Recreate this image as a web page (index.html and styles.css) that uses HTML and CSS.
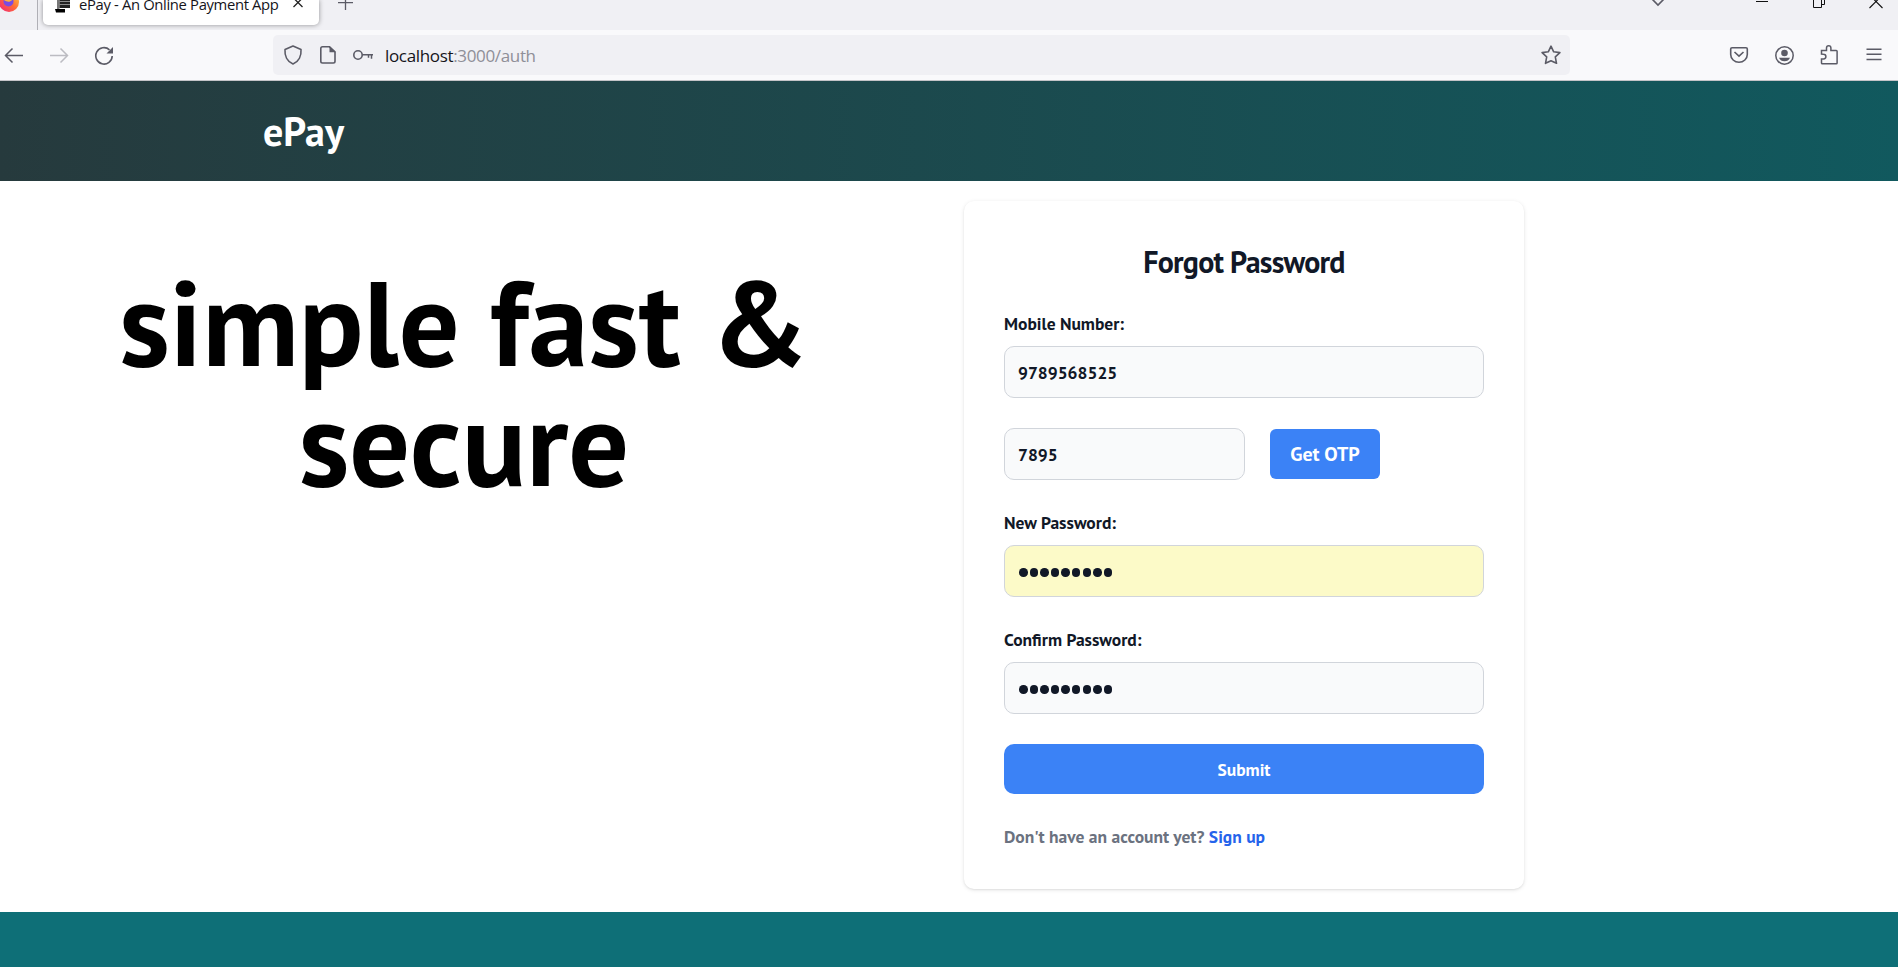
FILE: index.html
```
<!DOCTYPE html>
<html lang="en">
<head>
<meta charset="utf-8">
<title>ePay - An Online Payment App</title>
<link rel="stylesheet" href="styles.css">
</head>
<body>
<div class="tabstrip">
  <svg class="fx" width="20" height="30" viewBox="0 0 20 30"><defs><linearGradient id="fxg" x1="1" y1="0" x2="0" y2="1"><stop offset="0" stop-color="#ffd43a"/><stop offset=".5" stop-color="#ff6a36"/><stop offset="1" stop-color="#f0207e"/></linearGradient></defs><circle cx="9" cy="2" r="10" fill="url(#fxg)"/><circle cx="8.500" cy="1.500" r="5" fill="#7a4be0"/><path d="M4 0c3 2 6 3 9-1l-1-3H4z" fill="#ffb23a"/></svg>
  <div class="sep"></div>
  <div class="tab">
    <svg class="fav" width="16" height="14" viewBox="0 0 16 14"><path d="M2-1h2.500V9H2z" fill="#777"/><path d="M4.500-2H15V8H4.500z" fill="#222"/><path d="M4.500 1.500H15M4.500 4.500H15" stroke="#999" stroke-width=".9"/><path d="M0 9h10v3.500H1z" fill="#000"/></svg>
    <span class="tabtitle">ePay - An Online Payment App</span>
    <svg class="tabx" width="12" height="10" viewBox="0 0 12 10"><path d="M1.500-2l9 9M10.500-2l-9 9" stroke="#222" stroke-width="1.300"/></svg>
  </div>
  <svg class="plus" width="16" height="12" viewBox="0 0 16 12"><path d="M0 2.700h15M7.500-4v14" stroke="#5b5b66" stroke-width="1.300"/></svg>
  <div class="winctl">
    <svg width="14" height="12" viewBox="0 0 14 12"><path d="M1-1l6 6 6-6" fill="none" stroke="#5b5b66" stroke-width="1.600"/></svg>
    <svg class="min" width="12" height="12" viewBox="0 0 12 12"><path d="M0 1.500h12" stroke="#111"/></svg>
    <svg class="res" width="13" height="12" viewBox="0 0 13 12"><path d="M.5-2v9.500h8V-2M9 4.500h2.500V-2" fill="none" stroke="#111"/></svg>
    <svg class="cls" width="14" height="12" viewBox="0 0 14 12"><path d="M.5-5l13 13M13.500-5l-13 13" stroke="#111" stroke-width="1.100"/></svg>
  </div>
</div>
<div class="toolbar">
  <div class="nav">
    <svg width="20" height="20" viewBox="0 0 20 20"><path d="M1 10.500h18M8.500 3.500L1.500 10.500l7 7" fill="none" stroke="#5b5b66" stroke-width="1.500"/></svg>
    <svg width="20" height="20" viewBox="0 0 20 20"><path d="M1 10.500h18M11.500 3.500l7 7-7 7" fill="none" stroke="#bcbcc2" stroke-width="1.500"/></svg>
    <svg width="20" height="20" viewBox="0 0 20 20"><path d="M15.500 4.800A8.200 8.200 0 1 0 18.200 11" fill="none" stroke="#5b5b66" stroke-width="1.600"/><path d="M19 2v6.500h-6.500z" fill="#5b5b66"/></svg>
  </div>
  <div class="urlbar">
    <svg class="u1" width="20" height="20" viewBox="0 0 20 20"><path d="M10 1l8 3.500c.5 6-2 12-8 14.500C4 16.500 1.500 10.500 2 4.500z" fill="none" stroke="#5b5b66" stroke-width="1.600" stroke-linejoin="round"/></svg>
    <svg class="u2" width="20" height="20" viewBox="0 0 20 20"><path d="M4.500 1.800h7l5.500 5v9.500q0 1.700-1.700 1.700H4.500q-1.700 0-1.700-1.700V3.500q0-1.700 1.700-1.700z" fill="none" stroke="#5b5b66" stroke-width="1.600"/><path d="M11.500 1v6.200h6z" fill="#5b5b66"/></svg>
    <svg class="u3" width="20" height="20" viewBox="0 0 20 20"><circle cx="5" cy="10" r="4.200" fill="none" stroke="#5b5b66" stroke-width="1.600"/><path d="M9 9.700h11M18.500 9.700v4M15.500 9.700v3" fill="none" stroke="#5b5b66" stroke-width="1.500"/></svg>
    <span class="url">localhost<span class="path">:3000/auth</span></span>
    <svg class="star" width="20" height="20" viewBox="0 0 20 20"><path d="M10 1.200l2.700 5.600 6.200.8-4.600 4.200 1.200 6.500L10 15.800l-5.500 2.500 1.200-6.500L1.100 7.600l6.200-.8z" fill="none" stroke="#5b5b66" stroke-width="1.600" stroke-linejoin="round"/></svg>
  </div>
  <div class="tools">
    <svg width="20" height="20" viewBox="0 0 20 20"><path d="M3 2.800h14q1.300 0 1.300 1.300v5.400a8.300 7.800 0 0 1-16.600 0V4.100Q1.700 2.800 3 2.800z" fill="none" stroke="#5b5b66" stroke-width="1.600"/><path d="M5.500 7L10 11.200 14.500 7" fill="none" stroke="#5b5b66" stroke-width="1.600"/></svg>
    <svg width="20" height="20" viewBox="0 0 20 20"><circle cx="10.500" cy="10.500" r="8.700" fill="none" stroke="#5b5b66" stroke-width="1.500"/><circle cx="10.500" cy="8" r="3.300" fill="#5b5b66"/><path d="M5 12.700h11q-1.500 3.600-5.500 3.600t-5.500-3.600z" fill="#5b5b66"/></svg>
    <svg width="20" height="20" viewBox="0 0 20 20"><path d="M2.500 9V5.500h5V3a2.200 2.200 0 0 1 4.400 0v2.500h5.400q.8 0 .8.800V18q0 .8-.8.800H3.300q-.8 0-.8-.8v-4H4.500a2.300 2.300 0 0 0 0-4.800z" fill="none" stroke="#5b5b66" stroke-width="1.500"/></svg>
    <svg width="20" height="20" viewBox="0 0 20 20"><path d="M2.500 4.200h15M2.500 9.200h15M2.500 14.400h15" stroke="#5b5b66" stroke-width="1.500"/></svg>
  </div>
</div>
<header class="header"><span class="brand">ePay</span></header>
<main class="main">
  <h1 class="hero">simple fast &amp;<br>secure</h1>
  <section class="card">
    <h2 class="title">Forgot Password</h2>
    <div class="field"><label class="label">Mobile Number:</label><div class="input"><span class="num">9789568525</span></div></div>
    <div class="otp"><div class="input short"><span class="num">7895</span></div><button class="getotp">Get OTP</button></div>
    <div class="field"><label class="label">New Password:</label><div class="input filled"><span class="dots"><i></i><i></i><i></i><i></i><i></i><i></i><i></i><i></i><i></i></span></div></div>
    <div class="field"><label class="label">Confirm Password:</label><div class="input"><span class="dots"><i></i><i></i><i></i><i></i><i></i><i></i><i></i><i></i><i></i></span></div></div>
    <button class="submit">Submit</button>
    <p class="signup">Don't have an account yet? <a class="link">Sign up</a></p>
  </section>
</main>
<footer class="footer"></footer>
</body>
</html>
```
FILE: styles.css
```
* { box-sizing: border-box; }
body { margin: 0; height: 967px; overflow: hidden; background: #fff; display: flex; flex-direction: column; font-family: "PT Sans", "Open Sans", "Noto Sans", sans-serif; font-weight: 700; }
svg { display: block; flex: none; }
.tabstrip { height: 30px; background: #f0f0f4; display: flex; align-items: flex-start; overflow: hidden; }
.sep { width: 1px; height: 30px; margin-left: 17px; background: #b0b0b6; }
.tab { width: 276px; height: 25px; margin-left: 5px; background: #fff; border-radius: 0 0 5px 5px; box-shadow: 0 0 5px rgba(0,0,0,.4); display: flex; align-items: flex-start; padding-left: 12px; }
.tabtitle { font: 400 14.8px/20px "Open Sans", sans-serif; letter-spacing: -.34px; color: #15141a; margin: -6px 0 0 8px; width: 204px; white-space: nowrap; }
.tabx { margin-left: 9px; }
.plus { margin-left: 19px; }
.winctl { margin-left: auto; display: flex; padding-right: 15px; }
.min { margin-left: 91px; }
.res { margin-left: 45px; }
.cls { margin-left: 43px; }
.toolbar { height: 51px; background: #f9f9fb; border-bottom: 1px solid #c4c4c8; display: flex; align-items: center; }
.nav { display: flex; gap: 25px; padding-left: 4px; width: 273px; }
.urlbar { width: 1297px; height: 40px; border-radius: 5px; background: #f0f0f4; display: flex; align-items: center; padding: 0 9px 0 10px; }
.u2 { margin-left: 15px; }
.u3 { margin-left: 15px; }
.url { font: 400 17px/24px "Open Sans", sans-serif; letter-spacing: -.34px; color: #15141a; margin-left: 12px; padding-top: 2px; }
.path { color: #8f8f98; }
.star { margin-left: auto; }
.tools { display: flex; gap: 25px; margin-left: auto; padding-right: 14px; }
.header { height: 100px; background: linear-gradient(90deg, #263a3d, #11595e); display: flex; align-items: center; padding-left: 263px; }
.brand { font-size: 40px; line-height: 45px; color: #fff; }
.main { height: 731px; display: flex; align-items: flex-start; }
.hero { margin: 81px 0 0; width: 928px; text-align: center; font-size: 120px; line-height: 120px; color: #000; }
.card { width: 560px; height: 688px; margin: 20px 0 0 36px; padding: 40px; border-radius: 10px; background: #fff; box-shadow: 0 1px 4px rgba(0,0,0,.1), 0 1px 2px rgba(0,0,0,.06); display: flex; flex-direction: column; gap: 30px; color: #111827; font-size: 17.5px; line-height: 25px; }
.title { margin: 0; padding-top: 2px; font-size: 30px; line-height: 38px; letter-spacing: -.75px; text-align: center; }
.field { display: flex; flex-direction: column; gap: 10px; align-items: stretch; }
.input { height: 52px; border: 1px solid #d1d5db; border-radius: 10px; background: #f9fafb; display: flex; align-items: center; padding-left: 13px; }
.filled { background: #fcfac8; }
.otp { display: flex; align-items: center; gap: 25px; }
.short { width: 241px; }
.getotp { width: 110px; height: 50px; border: 0; padding: 0; border-radius: 6px; background: #3b82f6; color: #fff; font: inherit; font-size: 20px; }
.submit { height: 50px; border: 0; padding: 0; border-radius: 10px; background: #3b82f6; color: #fff; font: inherit; }
.dots { display: flex; gap: 2.100px; padding: 3px 0 0 1px; }
.dots i { width: 8.500px; height: 8.500px; border-radius: 50%; background: #111827; }
.signup { margin: 0; color: #6b7280; }
.link { color: #2563eb; }
.footer { flex: 1; background: #0e6f77; }
```
